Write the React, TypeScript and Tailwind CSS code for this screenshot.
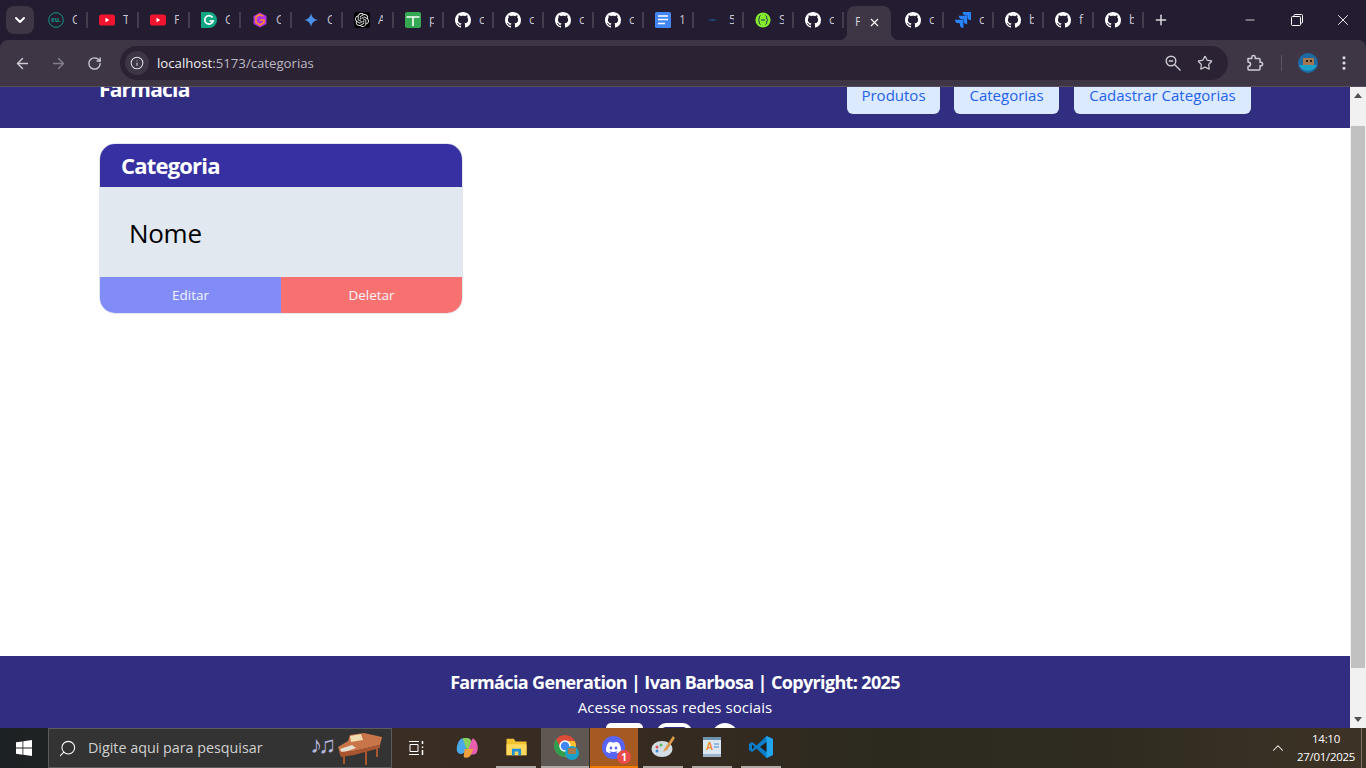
import React from "react";
import { ArrowLeft, ArrowRight, RotateCw, Info, Star, EllipsisVertical, Plus, Minus, X, ChevronDown, ChevronUp, Search } from "lucide-react";
import { SiOpenai, SiJira, SiDiscord } from "react-icons/si";

const GH = "M8 0C3.58 0 0 3.58 0 8c0 3.54 2.29 6.53 5.47 7.59.4.07.55-.17.55-.38 0-.19-.01-.82-.01-1.49-2.01.37-2.53-.49-2.69-.94-.09-.23-.48-.94-.82-1.13-.28-.15-.68-.52-.01-.53.63-.01 1.08.58 1.23.82.72 1.21 1.87.87 2.33.66.07-.52.28-.87.51-1.07-1.78-.2-3.64-.89-3.64-3.95 0-.87.31-1.59.82-2.15-.08-.2-.36-1.02.08-2.12 0 0 .67-.21 2.2.82.64-.18 1.32-.27 2-.27.68 0 1.36.09 2 .27 1.53-1.04 2.2-.82 2.2-.82.44 1.1.16 1.92.08 2.12.51.56.82 1.27.82 2.15 0 3.07-1.87 3.75-3.65 3.95.29.25.54.73.54 1.48 0 1.07-.01 1.93-.01 2.2 0 .21.15.46.55.38A8.013 8.013 0 0016 8c0-4.42-3.58-8-8-8z";

function Fav({ kind }: { kind: string }) {
  const c = "w-4 h-4 shrink-0";
  switch (kind) {
    case "eu":
      return (
        <svg viewBox="0 0 16 16" className={c}>
          <circle cx="8" cy="8" r="7.3" fill="none" stroke="#14a08e" strokeWidth="0.9" />
          <text x="8" y="10.2" textAnchor="middle" fontSize="6.5" fontWeight="700" fill="#14a08e" fontFamily="Liberation Sans">eu.</text>
        </svg>
      );
    case "yt":
      return (
        <svg viewBox="0 0 16 16" className={c}>
          <rect x="0" y="2.5" width="16" height="11" rx="2.6" fill="#f0142f" />
          <path d="M6.5 5.8 10.2 8 6.5 10.2z" fill="#fff" />
        </svg>
      );
    case "gram":
      return (
        <svg viewBox="0 0 16 16" className={c}>
          <path d="M8 0a8 8 0 1 1 0 16H0.3A8 8 0 0 1 8 0z" fill="#11a683" />
          <path d="M11.6 5.4A4.3 4.3 0 1 0 12.2 9H8.4" fill="none" stroke="#fff" strokeWidth="1.7" />
        </svg>
      );
    case "hex":
      return (
        <svg viewBox="0 0 16 16" className={c}>
          <path d="M8 0.5 14.5 4v8L8 15.5 1.5 12V4z" fill="#b02fe6" />
          <path d="M11.5 4 7 2.8 4 5v5.5L8 13l4-2.500V8H8" fill="none" stroke="#f5892a" strokeWidth="1.7" />
        </svg>
      );
    case "gem":
      return (
        <svg viewBox="0 0 16 16" className={c}>
          <path d="M8 1c.6 4 2.8 6.3 7 7-4.2.7-6.4 3-7 7-.6-4-2.8-6.3-7-7 4.200-.7 6.400-3 7-7z" fill="#4a8fe8" />
        </svg>
      );
    case "gpt":
      return (
        <span className="w-4 h-4 shrink-0 bg-black rounded-[3px] flex items-center justify-center">
          <SiOpenai className="w-[14px] h-[14px] text-[#e8e8e8]" />
        </span>
      );
    case "t":
      return (
        <svg viewBox="0 0 16 16" className={c}>
          <rect width="16" height="16" rx="2" fill="#34a853" />
          <path d="M1.500 5h13M8 5v9" stroke="#fff" strokeWidth="1.600" />
        </svg>
      );
    case "doc":
      return (
        <svg viewBox="0 0 16 16" className={c}>
          <rect width="16" height="16" rx="1.500" fill="#4285f4" />
          <path d="M3 4h10M3 7.500h10M3 11.500h7" stroke="#fff" strokeWidth="1.600" />
        </svg>
      );
    case "dash":
      return (
        <svg viewBox="0 0 16 16" className={c}>
          <path d="M3 8h3" stroke="#1d3c63" strokeWidth="1.300" />
          <path d="M6 8h3" stroke="#1667b0" strokeWidth="1.300" />
          <path d="M9 8h3" stroke="#1d3c63" strokeWidth="1.300" />
        </svg>
      );
    case "sw":
      return (
        <svg viewBox="0 0 16 16" className={c}>
          <circle cx="8" cy="8" r="7.600" fill="#85ea2d" />
          <path d="M5.500 3.500C3.500 3.500 5 8 3.300 8 5 8 3.500 12.500 5.500 12.500M10.500 3.500C12.500 3.500 11 8 12.700 8 11 8 12.500 12.500 10.500 12.500M6 8h4" fill="none" stroke="#173647" strokeWidth="1" />
        </svg>
      );
    case "jira":
      return <SiJira className="w-4 h-4 shrink-0 text-[#2684ff]" />;
    default:
      return (
        <svg viewBox="0 0 16 16" className={c}>
          <path d={GH} fill="#fff" fillRule="evenodd" />
        </svg>
      );
  }
}

const tabsA = [
  ["eu", "C", 51], ["yt", "T", 51], ["yt", "F", 51], ["gram", "G", 51], ["hex", "G", 51], ["gem", "G", 51], ["gpt", "A", 51], ["t", "p", 50],
  ["gh", "c", 50], ["gh", "c", 50], ["gh", "c", 50], ["gh", "c", 50], ["doc", "1", 50], ["dash", "5", 50], ["sw", "S", 50], ["gh", "c", 50],
] as [string, string, number][];
const tabsB = [["gh", "c", 50], ["jira", "c", 50], ["gh", "b", 50], ["gh", "f", 50], ["gh", "b", 50]] as [string, string, number][];

function Tab({ kind, letter, width }: { kind: string; letter: string; width: number }) {
  return (
    <div className="h-full flex items-center" style={{ width }}>
      <div className="pl-[11px] flex items-center gap-[8px] flex-1 min-w-0">
        <Fav kind={kind} />
        <span className="w-[5px] overflow-hidden text-[12px] leading-4 text-[#c9c5cf]">{letter}</span>
      </div>
      <span className="w-[2px] h-4 bg-[#453c4d] shrink-0" />
    </div>
  );
}

function TabStrip() {
  return (
    <div className="h-10 shrink-0 bg-[#241c30] flex items-center pl-[6px]">
      <div className="w-7 h-7 rounded-lg bg-[#3e3545] flex items-center justify-center shrink-0 mb-[1px]">
        <ChevronDown className="w-4 h-4 text-white" strokeWidth={3} />
      </div>
      <div className="w-[3px] shrink-0" />
      <div className="h-full flex items-center">
        {tabsA.map(([k, l, w], i) => (
          <Tab key={i} kind={k} letter={l} width={w} />
        ))}
      </div>
      <div className="relative h-[34px] self-end w-[44px] ml-[3px] mr-[3px] bg-[#3e3545] rounded-t-lg flex items-center pl-[8px] text-[12px] text-[#d5d2d9] shrink-0">
        <span className="w-[5px] overflow-hidden -mt-[2px]">F</span>
        <X className="w-[13px] h-[13px] text-white ml-[8px] -mt-[2px]" strokeWidth={2} />
        <span className="absolute bottom-0 -left-2 w-2 h-2 bg-[radial-gradient(circle_at_0_0,transparent_8px,#3e3545_8.5px)]" />
        <span className="absolute bottom-0 -right-2 w-2 h-2 bg-[radial-gradient(circle_at_100%_0,transparent_8px,#3e3545_8.5px)]" />
      </div>
      <div className="h-full flex items-center">
        {tabsB.map(([k, l, w], i) => (
          <Tab key={i} kind={k} letter={l} width={w} />
        ))}
      </div>
      <Plus className="w-4 h-4 text-[#dcdae0] ml-[9px] shrink-0" strokeWidth={2.2} />
      <div className="flex-1" />
      <div className="flex items-center h-full shrink-0">
        <div className="w-[46px] flex justify-center"><Minus className="w-[14px] h-[14px] text-white" strokeWidth={1.3} /></div>
        <div className="w-[46px] flex justify-center ml-[1px]">
          <svg viewBox="0 0 12 12" className="w-[12px] h-[12px]" fill="none" stroke="#fff" strokeWidth="1">
            <rect x="0.500" y="2.500" width="9" height="9" rx="1" />
            <path d="M3 2.500V1.500a1 1 0 0 1 1-1h6.500a1 1 0 0 1 1 1V8a1 1 0 0 1-1 1h-1" />
          </svg>
        </div>
        <div className="w-[46px] flex justify-center"><X className="w-[18px] h-[18px] text-white" strokeWidth={1.2} /></div>
      </div>
    </div>
  );
}

function Toolbar() {
  return (
    <div className="h-[47px] shrink-0 bg-[#241c30]">
      <div className="h-full bg-[#3e3545] rounded-t-lg border-b border-[#57505c] flex items-center pl-[14px] pr-[13px]">
        <ArrowLeft className="w-[17px] h-[17px] text-[#cfcbd3]" strokeWidth={2} />
        <ArrowRight className="w-[17px] h-[17px] text-[#847d8b] ml-[19px]" strokeWidth={2} />
        <RotateCw className="w-[15px] h-[15px] text-[#cfcbd3] ml-[20px]" strokeWidth={2.1} />
        <div className="ml-[18px] h-[34px] w-[1108px] rounded-full bg-[#2b2333] flex items-center pl-[5px] pr-[15px]">
          <div className="w-6 h-6 rounded-full bg-[#3e3545] flex items-center justify-center">
            <Info className="w-[14px] h-[14px] text-[#dcdae0]" strokeWidth={1.8} />
          </div>
          <span className="ml-2 text-[13.200px] leading-[18px] text-[#bdb8c2] whitespace-nowrap"><span className="text-[#f0eef2]">localhost</span>:5173/categorias</span>
          <div className="flex-1" />
          <svg viewBox="0 0 16 16" className="w-[16px] h-[16px]" fill="none" stroke="#cfcbd3" strokeWidth="1.400">
            <circle cx="6" cy="6" r="4.800" />
            <path d="M9.500 9.500 15.500 15.500M3.800 6h4.400" />
          </svg>
          <Star className="w-[16px] h-[16px] text-[#cfcbd3] ml-[16px]" strokeWidth={1.8} />
        </div>
        <svg viewBox="0 0 18 18" className="w-[18px] h-[18px] ml-[18px]" fill="none" stroke="#cfcbd3" strokeWidth="1.500" strokeLinejoin="round">
          <path d="M2 4.500h3.800V3.300a1.700 1.700 0 0 1 3.400 0v1.200H13a1 1 0 0 1 1 1v2.700h.8a1.800 1.800 0 0 1 0 3.600H14V15a1 1 0 0 1-1 1H3a1 1 0 0 1-1-1v-2.500c1.700 0 2.500-1 2.500-2.200S3.700 8 2 8z" />
        </svg>
        <span className="w-px h-4 bg-[#5d5563] ml-[17px]" />
        <svg viewBox="0 0 20 20" className="w-5 h-5 ml-[16px]">
          <circle cx="10" cy="10" r="10" fill="#1f6aa5" />
          <rect x="5" y="5" width="11" height="7" fill="#a5784f" />
          <rect x="8" y="7" width="2" height="2" fill="#222" />
          <rect x="12" y="7" width="2" height="2" fill="#222" />
          <path d="M1 12h18a10 10 0 0 1-18 0z" fill="#1ba0c9" />
        </svg>
        <EllipsisVertical className="w-[18px] h-[18px] text-[#dcdae0] ml-[17px]" strokeWidth={2.200} />
      </div>
    </div>
  );
}

function Scrollbar() {
  return (
    <div className="w-4 shrink-0 bg-[#f1f1f1] flex flex-col items-center">
      <div className="h-[17px] flex items-center justify-center">
        <svg viewBox="0 0 8 5" className="w-2 h-[5px]"><path d="M4 0 8 5H0z" fill="#505050" /></svg>
      </div>
      <div className="flex-1 w-full pt-[22px] px-px">
        <div className="h-[542px] bg-[#c1c1c1]" />
      </div>
      <div className="h-[17px] flex items-center justify-center">
        <svg viewBox="0 0 8 5" className="w-2 h-[5px]"><path d="M4 5 8 0H0z" fill="#505050" /></svg>
      </div>
    </div>
  );
}

function Page() {
  return (
    <div className="flex-1 min-h-0 flex font-['Open_Sans',sans-serif]">
      <div className="flex-1 min-w-0 flex flex-col overflow-hidden bg-white">
        <header className="h-[41px] shrink-0 bg-[#312e81]">
          <div className="pl-[99px] pr-[99px] -mt-[8px] flex justify-between items-start">
            <span className="text-[21px] leading-8 font-bold text-white -mt-[6px] tracking-[-0.8px]">Farmácia</span>
            <nav className="flex text-[15px] text-[#2563eb] -mt-[8px]">
              <span className="bg-[#dbeafe] rounded-md h-[43px] w-[93px] flex items-end justify-center pb-[8px]">Produtos</span>
              <span className="bg-[#dbeafe] rounded-md h-[43px] w-[105px] ml-[14px] flex items-end justify-center pb-[8px]">Categorias</span>
              <span className="bg-[#dbeafe] rounded-md h-[43px] w-[177px] ml-[15px] flex items-end justify-center pb-[8px]">Cadastrar Categorias</span>
            </nav>
          </div>
        </header>
        <main className="h-[528px] shrink-0 pl-[99px] pt-[15px]">
          <article className="w-[364px] h-[171px] rounded-2xl overflow-hidden border border-[#e2e8f0] flex flex-col">
            <h2 className="h-[43px] shrink-0 bg-[#3730a3] text-white text-[22px] font-bold pl-[21px] flex items-center tracking-[-0.8px]">Categoria</h2>
            <p className="flex-1 bg-[#e2e8f0] text-black text-[26px] pl-[29px] pt-[2px] flex items-center tracking-[-0.3px]">Nome</p>
            <div className="h-9 shrink-0 flex text-[13.500px] text-[#f1f5f9]">
              <span className="flex-1 bg-[#818cf8] flex items-center justify-center pt-[1px]">Editar</span>
              <span className="flex-1 bg-[#f87171] flex items-center justify-center pt-[1px]">Deletar</span>
            </div>
          </article>
        </main>
        <footer className="flex-1 bg-[#312e81] text-white flex flex-col items-center pt-[12px]">
          <p className="text-[18px] leading-[28px] font-bold tracking-[-0.65px] whitespace-nowrap">Farmácia Generation | Ivan Barbosa | Copyright: 2025</p>
          <p className="text-[15px] leading-6 -mt-[1px] tracking-[0.05px]">Acesse nossas redes sociais</p>
          <div className="flex items-start mt-[4px] mr-[6px]">
            <span className="w-[37px] h-[38px] rounded-[5px] bg-white" />
            <span className="w-[35px] h-[38px] ml-[14px] rounded-[9px] border-[4px] border-white" />
            <span className="w-[26px] h-[26px] rounded-full bg-white ml-[20px]" />
          </div>
        </footer>
      </div>
      <Scrollbar />
    </div>
  );
}

function TaskSlot({ w, line, bg, children }: { w: number; line?: string; bg?: string; children: React.ReactNode }) {
  return (
    <div className={`h-full flex flex-col ${bg ?? ""}`} style={{ width: w }}>
      <div className="flex-1 flex items-center justify-center">{children}</div>
      <div className={`h-[2px] mx-auto ${line ?? ""}`} style={{ width: w }} />
    </div>
  );
}

function Taskbar() {
  return (
    <div className="h-10 shrink-0 flex items-center text-white font-['Open_Sans',sans-serif] bg-[linear-gradient(90deg,#1c2123_0%,#1f2223_3%,#3a2d24_30%,#352a20_50%,#2c2a1f_65%,#2f2b20_80%,#3d3326_100%)]">
      <div className="w-12 flex justify-center shrink-0">
        <svg viewBox="0 0 16 16" className="w-4 h-4" fill="#fff">
          <path d="M0 2.300 6.500 1.400v6.200H0zM7.300 1.300 16 0v7.600H7.300zM0 8.400h6.500v6.300L0 13.700zM7.300 8.400H16V16l-8.700-1.200z" />
        </svg>
      </div>
      <div className="w-[344px] h-full bg-[#333333] border border-[#5c5c5c] flex items-center pl-[9px] overflow-hidden shrink-0">
        <Search className="w-[19px] h-[19px] text-white -scale-x-100" strokeWidth={1.3} />
        <span className="ml-[11px] text-[14.300px] text-[#d0d0d0]">Digite aqui para pesquisar</span>
        <div className="flex-1" />
        <span className="text-[24px] text-[#b5b5dc] leading-none -mt-2 tracking-[-4px] mr-[4px]">♪♫</span>
        <svg viewBox="0 0 48 36" className="w-[48px] h-[36px] mr-[7px] mt-[1px]">
          <path d="M2 16 12 10 14 4 28 2 46 6 44 14 18 20 4 22z" fill="#c9754a" />
          <path d="M14 5 25 3 27 9 15 11z" fill="#f0dcb0" />
          <path d="M4 18 16 14 20 17 6 22z" fill="#e8e0d0" />
          <path d="M3 21 18 20 44 14 44 17 18 24 5 26z" fill="#a9552f" />
          <path d="M7 25h2v8H7zM29 20h2v14h-2zM40 16h2v10h-2z" fill="#a9552f" />
        </svg>
      </div>
      <div className="w-[48px] flex justify-center shrink-0">
        <svg viewBox="0 0 16 16" className="w-4 h-4" fill="none" stroke="#fff" strokeWidth="1">
          <path d="M1 1.500h10M1 14.500h10M2 4.500h8v7H2z" />
          <path d="M14.500 1v3M14.500 6.500v1.500M14.500 10v5" strokeWidth="1.500" />
        </svg>
      </div>
      <div className="h-full flex ml-[3px] items-stretch">
        <div className="w-[48px] flex flex-col">
          <div className="flex-1 flex items-center justify-center">
            <svg viewBox="0 0 24 22" className="w-[23px] h-[22px]">
              <path d="M6 1h8l-5 14c-1 3-7 3-8-1C0 9 3 2 6 1z" fill="#4aa8e8" />
              <path d="M7 1c5-1 8 0 9 3l3 9-8-1z" fill="#8ad05c" />
              <path d="M18 1c4 2 6 10 4 14-1 3-4 3-6 3h-5l5-14c.500-2 1-3 2-3z" fill="#e85fb0" />
              <path d="M9 12h9l-3 7c-1 2-6 3-7 1z" fill="#f0a03c" />
            </svg>
          </div>
        </div>
        <div className="w-[5px]" />
        <TaskSlot w={40} line="bg-[#b0aaa6]">
          <svg viewBox="0 0 24 22" className="w-[23px] h-[20px]">
            <path d="M1 2h8l2 3h12v15H1z" fill="#f2c230" />
            <path d="M1 8h22v12H1z" fill="#ffd95e" />
            <path d="M7 13h10v7h-3v-4h-4v4H7z" fill="#1d8fd8" />
          </svg>
        </TaskSlot>
        <div className="w-[5px]" />
        <TaskSlot w={48} bg="bg-[#5f5852]" line="bg-[#b0aaa6]">
          <svg viewBox="0 0 26 26" className="w-[26px] h-[26px] ml-[2px]">
            <circle cx="12" cy="12" r="11" fill="#dd4b39" />
            <path d="M1 12a11 11 0 0 0 11 11l5-10-10 0L3 5a11 11 0 0 0-2 7z" fill="#2e9e4f" />
            <path d="M12 23a11 11 0 0 0 11-11c0-2-.500-4-1.500-5H12l5 6z" fill="#fbc02d" />
            <circle cx="12" cy="12" r="5" fill="#4285f4" stroke="#fff" strokeWidth="1.500" />
            <circle cx="19" cy="19" r="7" fill="#1ba0c9" />
            <rect x="15" y="14" width="8" height="6" fill="#a5784f" />
          </svg>
        </TaskSlot>
        <div className="w-[1px]" />
        <TaskSlot w={48} bg="bg-[#a65a21]" line="bg-[#f57c00]">
          <div className="relative w-[23px] h-[23px] rounded-full bg-[#5865f2] flex items-center justify-center -ml-[1px]">
            <SiDiscord className="w-[15px] h-[15px] text-white" />
            <span className="absolute -right-[6px] -bottom-[5px] w-[14px] h-[14px] rounded-full bg-[#ea4c4c] text-white text-[10px] font-bold leading-[14px] text-center">1</span>
          </div>
        </TaskSlot>
        <div className="w-[5px]" />
        <TaskSlot w={40} line="bg-[#b0aaa6]">
          <svg viewBox="0 0 24 24" className="w-[24px] h-[24px]">
            <ellipse cx="11" cy="14" rx="10.500" ry="8" fill="#d4dde6" />
            <circle cx="6" cy="12" r="1.500" fill="#d9534f" />
            <circle cx="10" cy="10" r="1.500" fill="#5cb85c" />
            <circle cx="6" cy="16" r="1.500" fill="#428bca" />
            <path d="M22 1 14 13l-2 4 4-2L24 3z" fill="#d99a4a" />
          </svg>
        </TaskSlot>
        <div className="w-[9px]" />
        <TaskSlot w={40} line="bg-[#b0aaa6]">
          <svg viewBox="0 0 20 24" className="w-[20px] h-[24px]">
            <rect x="1" y="2" width="18" height="20" fill="#dbe8f2" />
            <rect x="1" y="2" width="18" height="3" fill="#6f94b0" />
            <rect x="1" y="19" width="18" height="3" fill="#9db5c7" />
            <text x="4" y="15" fontSize="10" fontWeight="700" fill="#ef8a2c" fontFamily="Liberation Sans">A</text>
            <path d="M12 9h5M12 12h5" stroke="#4a88c7" strokeWidth="1.200" />
          </svg>
        </TaskSlot>
        <div className="w-[9px]" />
        <TaskSlot w={40} line="bg-[#b0aaa6]">
          <svg viewBox="0 0 24 24" className="w-[24px] h-[24px]">
            <path d="M17.500 1 24 4v16l-6.500 3-10-9.500L3 17l-3-2V9l3-2 4.500 3.500z" fill="#0a7ecb" />
            <path d="M17.500 1 24 4v16l-6.500 3z" fill="#23a5ee" />
            <path d="M17.500 7v10L11 12z" fill="#241f18" />
            <path d="M3 9.500v5L5.500 12z" fill="#241f18" />
          </svg>
        </TaskSlot>
      </div>
      <div className="flex-1" />
      <ChevronUp className="w-[18px] h-[18px] text-white shrink-0" strokeWidth={1.4} />
      <div className="w-[68px] ml-[5px] text-center text-[11.500px] leading-[18px] text-white shrink-0 tracking-[-0.3px]">
        <div>14:10</div>
        <div>27/01/2025</div>
      </div>
      <div className="w-[5px] h-full shrink-0 border-l border-[#7d7469] ml-[1px]" />
    </div>
  );
}

export default function App() {
  return (
    <div className="w-[1366px] h-[768px] overflow-hidden flex flex-col font-['Open_Sans',sans-serif]">
      <TabStrip />
      <Toolbar />
      <Page />
      <Taskbar />
    </div>
  );
}
